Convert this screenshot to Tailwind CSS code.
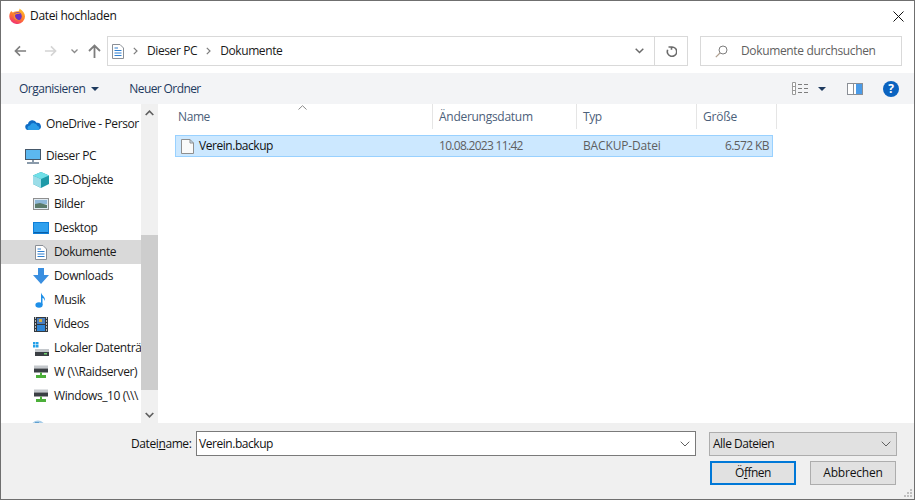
<!DOCTYPE html>
<html lang="de">
<head>
    <meta charset="UTF-8">
    <title>Datei hochladen</title>
    <script src="https://cdn.jsdelivr.net/npm/@tailwindcss/browser@4"></script>
</head>
<body class="bg-white overflow-hidden font-['Open_Sans','Noto_Sans',sans-serif] text-[12px] tracking-[-0.4px] text-[#1a1a1a]">
<div class="w-[915px] h-[500px] border border-[#6f6f6f] flex flex-col overflow-hidden">

    <!-- Title bar -->
    <div class="h-[30px] flex items-center pl-[8px] shrink-0">
        <svg class="shrink-0" width="16" height="16" viewBox="0 0 17 17">
            <defs>
                <linearGradient id="fx" x1="0.7" y1="0" x2="0.2" y2="1">
                    <stop offset="0" stop-color="#ffc02e"/>
                    <stop offset="0.5" stop-color="#ff7a2b"/>
                    <stop offset="1" stop-color="#f0257f"/>
                </linearGradient>
            </defs>
            <path d="M11 0.500 C15 2.500 17 6 17 9 A8.300 8 0 0 1 0.300 9 C0.300 6.500 1.200 4.500 2.500 3.200 C3 4 3.500 4.500 4.300 4.800 C5.500 3.500 8 3.500 10 3.500 C11 2.500 11.300 1.500 11 0.500Z" fill="url(#fx)"/>
            <circle cx="9.200" cy="8.800" r="4.300" fill="#6b2fc4"/>
            <path d="M4.800 7 C6.500 5 10.500 4.800 12.800 7 C10.500 6.200 7.500 6.300 6.500 7.500 C6 10 8 12.500 11 13 C7.500 14.500 3.500 11 4.800 7Z" fill="#ff8f2b"/>
        </svg>
        <span class="ml-[5px] text-[#111] tracking-[-0.33px]">Datei hochladen</span>
        <svg class="ml-auto mr-[10px] shrink-0" width="11" height="11" viewBox="0 0 11 11"><path d="M0.500 0.500 L10.500 10.500 M10.500 0.500 L0.500 10.500" stroke="#111" stroke-width="1"/></svg>
    </div>

    <!-- Navigation row -->
    <div class="h-[42px] flex items-center shrink-0 pb-[2px]">
        <div class="w-[106px] flex items-center shrink-0">
            <svg class="ml-[13px] shrink-0" width="13" height="12" viewBox="0 0 14 12"><path d="M13 6 H2 M6.500 1 L1.500 6 L6.500 11" fill="none" stroke="#7d7d7d" stroke-width="1.700"/></svg>
            <svg class="ml-[17px] shrink-0" width="13" height="12" viewBox="0 0 14 12"><path d="M1 6 H12 M7.500 1 L12.500 6 L7.500 11" fill="none" stroke="#d4d4d4" stroke-width="1.700"/></svg>
            <svg class="ml-[14px] shrink-0" width="7" height="5" viewBox="0 0 7 5"><path d="M0.500 0.500 L3.500 3.500 L6.500 0.500" fill="none" stroke="#8a8a8a" stroke-width="1.300"/></svg>
            <svg class="ml-[10px] shrink-0" width="13" height="14" viewBox="0 0 13 14"><path d="M6.500 14 V2 M1 7 L6.500 1.500 L12 7" fill="none" stroke="#7d7d7d" stroke-width="1.800"/></svg>
        </div>
        <div class="w-[581px] h-[30px] border border-[#d9d9d9] flex items-center shrink-0">
            <svg class="ml-[4px] shrink-0" width="12" height="15" viewBox="0 0 12 15">
                <path d="M0.500 0.500 H8 L11.500 4 V14.500 H0.500Z" fill="#fff" stroke="#8a8f96"/>
                <path d="M2.500 4 H6 M2.500 6.500 H9.500 M2.500 9 H9.500 M2.500 11.500 H9.500" stroke="#2f7fd0"/>
            </svg>
            <svg class="ml-[9px] shrink-0" width="5" height="8" viewBox="0 0 5 8"><path d="M0.800 0.800 L4 4 L0.800 7.200" fill="none" stroke="#7d7d7d" stroke-width="1.200"/></svg>
            <span class="ml-[9px]">Dieser PC</span>
            <svg class="ml-[9px] shrink-0" width="5" height="8" viewBox="0 0 5 8"><path d="M0.800 0.800 L4 4 L0.800 7.200" fill="none" stroke="#7d7d7d" stroke-width="1.200"/></svg>
            <span class="ml-[9px]">Dokumente</span>
            <svg class="ml-auto mr-[10px] shrink-0" width="9" height="6" viewBox="0 0 9 6"><path d="M0.700 0.700 L4.500 4.500 L8.300 0.700" fill="none" stroke="#6b6b6b" stroke-width="1.500"/></svg>
            <div class="w-[33px] h-full border-l border-[#d9d9d9] flex items-center justify-center shrink-0">
                <svg width="11" height="12" viewBox="0 0 11 12"><path d="M5 1 A4.700 4.700 0 1 1 1.200 3.800 M5 1 H2 M5 1 V3.800" transform="translate(0.500 1)" fill="none" stroke="#6b6b6b" stroke-width="1.600"/></svg>
            </div>
        </div>
        <div class="ml-[12px] w-[202px] h-[30px] border border-[#d9d9d9] flex items-center shrink-0">
            <svg class="ml-[14px] shrink-0" width="13" height="13" viewBox="0 0 13 13"><circle cx="8" cy="5" r="4" fill="none" stroke="#7d7d7d"/><path d="M5 8 L0.800 12.200" stroke="#b0a090" stroke-width="1.200"/></svg>
            <span class="ml-[13px] text-[#5f5f5f] tracking-[-0.35px]">Dokumente durchsuchen</span>
        </div>
    </div>

    <!-- Toolbar -->
    <div class="h-[31px] bg-[#f3f4f6] flex items-center shrink-0">
        <span class="ml-[18px] text-[#1e3a5f] tracking-[-0.5px]">Organisieren</span>
        <svg class="ml-[6px] shrink-0" width="8" height="4" viewBox="0 0 8 4"><path d="M0 0 H8 L4 4Z" fill="#1e3a5f"/></svg>
        <span class="ml-[30px] text-[#1e3a5f] tracking-[-0.6px]">Neuer Ordner</span>
        <svg class="ml-auto shrink-0" width="17" height="13" viewBox="0 0 17 13">
            <path d="M0.500 0.500 H3.500 V12.500 H0.500Z M0.500 4.500 H3.500 M0.500 8.500 H3.500" fill="#fff" stroke="#9a9a9a"/>
            <path d="M6 2.500 H10 M12 2.500 H16 M6 6.500 H10 M12 6.500 H16 M6 10.500 H10 M12 10.500 H16" stroke="#7d7d7d"/>
        </svg>
        <svg class="ml-[9px] shrink-0" width="8" height="4" viewBox="0 0 8 4"><path d="M0 0 H8 L4 4Z" fill="#1e3a5f"/></svg>
        <svg class="ml-[21px] shrink-0" width="16" height="12" viewBox="0 0 16 12">
            <rect x="0.500" y="0.500" width="15" height="11" fill="#fff" stroke="#8a8f96"/>
            <rect x="9" y="1" width="6" height="10" fill="#4a9be8"/>
            <rect x="6" y="1" width="1" height="10" fill="#8a8f96"/>
        </svg>
        <div class="ml-[20px] mr-[15px] w-[16px] h-[16px] rounded-full bg-[#0a63c0] text-white font-bold text-[12px] leading-[16px] text-center shrink-0">?</div>
    </div>

    <!-- Body -->
    <div class="flex-1 flex min-h-0">
        <!-- Sidebar -->
        <div class="w-[140px] shrink-0 overflow-hidden pt-[8px]">
            <div class="h-[24px] flex items-center pl-[24px] whitespace-nowrap">
                <svg class="shrink-0" width="16" height="11" viewBox="0 0 16 11"><path d="M3.500 11 A3 3 0 0 1 3 5 A4.500 4.500 0 0 1 11.500 3.800 A3.500 3.500 0 0 1 13 11Z" fill="#0f6cc4"/><path d="M3.500 11 A2.500 2.500 0 0 1 5 6.500 A4 4 0 0 1 12.500 7 A2.200 2.200 0 0 1 13.500 11Z" fill="#2b9de8"/></svg>
                <span class="ml-[5px]">OneDrive - Persor</span>
            </div>
            <div class="h-[24px] mt-[8px] flex items-center pl-[24px] whitespace-nowrap">
                <svg class="shrink-0" width="16" height="15" viewBox="0 0 16 15"><rect x="0.500" y="0.500" width="15" height="10" fill="#5cb8f0" stroke="#45586a"/><path d="M2 14 H14" stroke="#8a9aaa" stroke-width="2"/><path d="M7 11 H9 V13 H7Z" fill="#8a9aaa"/></svg>
                <span class="ml-[5px]">Dieser PC</span>
            </div>
            <div class="h-[24px] flex items-center pl-[32px] whitespace-nowrap">
                <svg class="shrink-0" width="16" height="16" viewBox="0 0 16 16"><path d="M8 0 L16 3.500 V12 L8 16 L0 12 V3.500Z" fill="#1e9aa8"/><path d="M0 3.500 L8 7 L16 3.500 L8 0Z" fill="#6fe0e8"/><path d="M0 3.500 L8 7 V16 L0 12Z" fill="#9bdde8"/></svg>
                <span class="ml-[5px]">3D-Objekte</span>
            </div>
            <div class="h-[24px] flex items-center pl-[32px] whitespace-nowrap">
                <svg class="shrink-0" width="16" height="12" viewBox="0 0 16 12"><rect x="0.500" y="0.500" width="15" height="11" fill="#dfeaf2" stroke="#8f8f8f"/><rect x="2" y="2" width="12" height="4" fill="#8fb8d8"/><path d="M2 6 L7 5 L14 7 V10 H2Z" fill="#5a7a6a"/></svg>
                <span class="ml-[5px]">Bilder</span>
            </div>
            <div class="h-[24px] flex items-center pl-[32px] whitespace-nowrap">
                <svg class="shrink-0" width="16" height="12" viewBox="0 0 16 12"><rect width="16" height="12" fill="#0f7fd8"/><rect x="1" y="1" width="14" height="9" fill="#2fa0ee"/><rect x="1" y="10" width="14" height="1" fill="#0b5fa8"/></svg>
                <span class="ml-[5px]">Desktop</span>
            </div>
            <div class="h-[24px] bg-[#d9d9d9] flex items-center pl-[34px] whitespace-nowrap">
                <svg class="shrink-0" width="12" height="15" viewBox="0 0 12 15"><path d="M0.500 0.500 H8 L11.500 4 V14.500 H0.500Z" fill="#fff" stroke="#8a8f96"/><path d="M2.500 4 H6 M2.500 6.500 H9.500 M2.500 9 H9.500 M2.500 11.500 H9.500" stroke="#2f7fd0"/></svg>
                <span class="ml-[7px]">Dokumente</span>
            </div>
            <div class="h-[24px] flex items-center pl-[32px] whitespace-nowrap">
                <svg class="shrink-0" width="16" height="16" viewBox="0 0 16 16"><path d="M5 0 H11 V7 H16 L8 16 L0 7 H5Z" fill="#3a8fe0"/></svg>
                <span class="ml-[5px]">Downloads</span>
            </div>
            <div class="h-[24px] flex items-center pl-[34px] whitespace-nowrap">
                <svg class="shrink-0" width="11" height="16" viewBox="0 0 11 16"><ellipse cx="4" cy="13" rx="3.600" ry="2.800" fill="#1e8fe8"/><path d="M6 13 V0.500 C7 4 10.500 4.500 10 9 C9 6.500 8 6 7.500 6 V13Z" fill="#1e8fe8"/></svg>
                <span class="ml-[8px]">Musik</span>
            </div>
            <div class="h-[24px] flex items-center pl-[33px] whitespace-nowrap">
                <svg class="shrink-0" width="14" height="15" viewBox="0 0 14 15"><rect width="14" height="15" fill="#33393f"/><rect x="3" y="1" width="8" height="6" fill="#4a7fc0"/><rect x="3" y="8" width="8" height="6" fill="#2e86d8"/><rect x="5" y="2" width="3" height="3" fill="#d8b040"/><path d="M1 1 H2 M1 4 H2 M1 7 H2 M1 10 H2 M1 13 H2 M12 1 H13 M12 4 H13 M12 7 H13 M12 10 H13 M12 13 H13" stroke="#e6e6e6" stroke-width="1.500"/></svg>
                <span class="ml-[6px]">Videos</span>
            </div>
            <div class="h-[24px] flex items-center pl-[32px] whitespace-nowrap">
                <svg class="shrink-0" width="16" height="15" viewBox="0 0 16 15"><path d="M0 1 H2.500 V3.500 H0Z M3 1 H5.500 V3.500 H3Z M0 4 H2.500 V6.500 H0Z M3 4 H5.500 V6.500 H3Z" fill="#22a0e8"/><rect x="2" y="8" width="14" height="3" fill="#c4c8cc"/><rect x="2" y="11" width="14" height="4" fill="#3a3f44"/><rect x="11" y="12" width="3" height="1.500" fill="#6fd06f"/></svg>
                <span class="ml-[5px]">Lokaler Datenträ</span>
            </div>
            <div class="h-[24px] flex items-center pl-[33px] whitespace-nowrap">
                <svg class="shrink-0" width="14" height="14" viewBox="0 0 14 14"><rect y="0.500" width="14" height="3" fill="#c4c8cc"/><rect y="3.500" width="14" height="4" fill="#3a3f44"/><path d="M6 7.500 H8 V10 H12 V13 H2 V10 H6Z" fill="#4caf3a"/></svg>
                <span class="ml-[6px]">W (\\Raidserver)</span>
            </div>
            <div class="h-[24px] flex items-center pl-[33px] whitespace-nowrap">
                <svg class="shrink-0" width="14" height="14" viewBox="0 0 14 14"><rect y="0.500" width="14" height="3" fill="#c4c8cc"/><rect y="3.500" width="14" height="4" fill="#3a3f44"/><path d="M6 7.500 H8 V10 H12 V13 H2 V10 H6Z" fill="#4caf3a"/></svg>
                <span class="ml-[6px]">Windows_10 (\\\</span>
            </div>
            <div class="h-[24px] mt-[8px] flex items-center pl-[29px]">
                <svg class="shrink-0" width="16" height="16" viewBox="0 0 16 16"><circle cx="8" cy="8" r="7.500" fill="#a8cde8"/><path d="M5 2 H9 V5 H5Z" fill="#5fa0d0"/></svg>
            </div>
        </div>

        <!-- Scrollbar -->
        <div class="w-[17px] shrink-0 bg-[#f0f0f0] flex flex-col items-center">
            <div class="h-[17px] flex items-center justify-center shrink-0">
                <svg width="9" height="6" viewBox="0 0 9 6"><path d="M0.700 5 L4.500 1.200 L8.300 5" fill="none" stroke="#606060" stroke-width="1.700"/></svg>
            </div>
            <div class="h-[114px] shrink-0"></div>
            <div class="w-full h-[155px] bg-[#cdcdcd] shrink-0"></div>
            <div class="flex-1"></div>
            <div class="h-[17px] flex items-center justify-center shrink-0">
                <svg width="9" height="6" viewBox="0 0 9 6"><path d="M0.700 1 L4.500 4.800 L8.300 1" fill="none" stroke="#606060" stroke-width="1.700"/></svg>
            </div>
        </div>

        <!-- File list -->
        <div class="flex-1 min-w-0 pl-[1px]">
            <div class="h-[25px] flex text-[#4c607a] relative">
                <svg class="absolute left-[139px] top-[1px]" width="9" height="5" viewBox="0 0 9 5"><path d="M0.500 4.500 L4.500 0.700 L8.500 4.500" fill="none" stroke="#8a8a8a"/></svg>
                <div class="w-[274px] pl-[19px] border-r border-[#e5e5e5] flex items-center">Name</div>
                <div class="w-[144px] pl-[6px] border-r border-[#e5e5e5] flex items-center tracking-[-0.28px]">Änderungsdatum</div>
                <div class="w-[120px] pl-[6px] border-r border-[#e5e5e5] flex items-center">Typ</div>
                <div class="w-[80px] pl-[6px] border-r border-[#e5e5e5] flex items-center tracking-[-0.2px]">Größe</div>
            </div>
            <div class="mt-[6px] ml-[16px] w-[598px] h-[22px] bg-[#cce8ff] border border-[#99d1ff] flex items-center text-[#5f5f5f]">
                <div class="w-[256px] pl-[5px] flex items-center text-[#111]">
                    <svg class="shrink-0" width="13" height="15" viewBox="0 0 13 15"><path d="M0.500 0.500 H9 L12.500 4 V14.500 H0.500Z M9 0.500 V4 H12.500" fill="#fafafa" stroke="#8f8f8f"/></svg>
                    <span class="ml-[5px] tracking-[-0.45px]">Verein.backup</span>
                </div>
                <div class="w-[144px] pl-[7px] tracking-[-0.7px]">10.08.2023 11:42</div>
                <div class="w-[120px] pl-[7px] tracking-[-0.15px]">BACKUP-Datei</div>
                <div class="flex-1 text-right pr-[3px] tracking-[-0.6px]">6.572 KB</div>
            </div>
        </div>
    </div>

    <!-- Footer -->
    <div class="h-[76px] bg-[#f0f0f0] shrink-0 relative pt-[8px]">
        <div class="flex items-center h-[25px]">
            <span class="ml-[130px] w-[60px] text-[#111] whitespace-nowrap">Datei<span class="underline">n</span>ame:</span>
            <div class="ml-[5px] w-[500px] h-[25px] bg-white border border-[#7a7a7a] flex items-center pl-[2px]">
                <span class="text-[#111] tracking-[-0.45px]">Verein.backup</span>
                <svg class="ml-auto mr-[5px] shrink-0" width="10" height="6" viewBox="0 0 10 6"><path d="M0.700 0.700 L5 5 L9.300 0.700" fill="none" stroke="#606060"/></svg>
            </div>
            <div class="ml-[13px] w-[188px] h-[24px] bg-[#e1e1e1] border border-[#adadad] flex items-center pl-[3px]">
                <span class="text-[#111] tracking-[-0.5px]">Alle Dateien</span>
                <svg class="ml-auto mr-[5px] shrink-0" width="10" height="6" viewBox="0 0 10 6"><path d="M0.700 0.700 L5 5 L9.300 0.700" fill="none" stroke="#606060"/></svg>
            </div>
        </div>
        <div class="flex mt-[5px] ml-[709px]">
            <div class="w-[86px] h-[24px] bg-[#e1e1e1] border-2 border-[#0078d7] flex items-center justify-center text-[#111] tracking-[-0.5px]"><span>Ö<span class="underline">f</span>fnen</span></div>
            <div class="ml-[14px] w-[86px] h-[24px] bg-[#e1e1e1] border border-[#adadad] flex items-center justify-center text-[#111] tracking-[-0.2px]">Abbrechen</div>
        </div>
        <svg class="absolute right-[2px] bottom-[2px]" width="9" height="9" viewBox="0 0 9 9"><path d="M7 1 H9 V3 H7Z M4 4 H6 V6 H4Z M7 4 H9 V6 H7Z M1 7 H3 V9 H1Z M4 7 H6 V9 H4Z M7 7 H9 V9 H7Z" fill="#bfbfbf"/></svg>
    </div>
</div>
</body>
</html>
